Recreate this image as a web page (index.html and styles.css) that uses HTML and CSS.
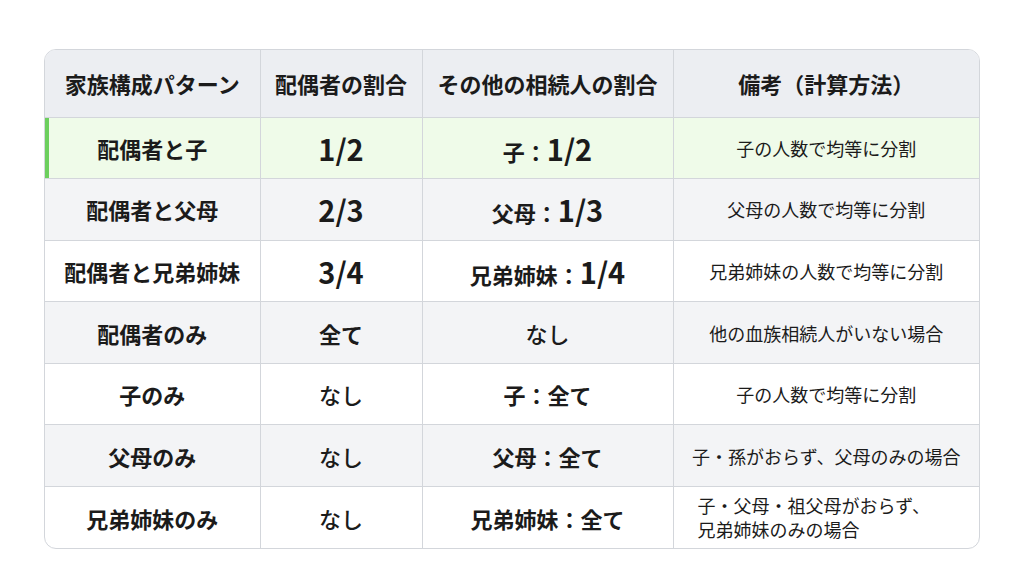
FILE: index.html
```html
<!DOCTYPE html>
<html lang="ja">
<head>
<meta charset="utf-8">
<link rel="stylesheet" href="styles.css">
</head>
<body>
<div class="card">
<table class="tbl">
<colgroup><col class="c1"><col class="c2"><col class="c3"><col class="c4"></colgroup>
<thead>
<tr><th>家族構成パターン</th><th>配偶者の割合</th><th>その他の相続人の割合</th><th>備考（計算方法）</th></tr>
</thead>
<tbody>
<tr class="hl"><td class="name">配偶者と子</td><td class="frac">1/2</td><td class="other">子：<span class="num">1/2</span></td><td class="note">子の人数で均等に分割</td></tr>
<tr class="alt"><td class="name">配偶者と父母</td><td class="frac">2/3</td><td class="other">父母：<span class="num">1/3</span></td><td class="note">父母の人数で均等に分割</td></tr>
<tr><td class="name">配偶者と兄弟姉妹</td><td class="frac">3/4</td><td class="other">兄弟姉妹：<span class="num">1/4</span></td><td class="note">兄弟姉妹の人数で均等に分割</td></tr>
<tr class="alt"><td class="name">配偶者のみ</td><td class="word">全て</td><td class="plain">なし</td><td class="note">他の血族相続人がいない場合</td></tr>
<tr><td class="name">子のみ</td><td class="plain">なし</td><td class="other">子：全て</td><td class="note">子の人数で均等に分割</td></tr>
<tr class="alt"><td class="name">父母のみ</td><td class="plain">なし</td><td class="other">父母：全て</td><td class="note">子・孫がおらず、父母のみの場合</td></tr>
<tr><td class="name">兄弟姉妹のみ</td><td class="plain">なし</td><td class="other">兄弟姉妹：全て</td><td class="note note-left"><span class="two">子・父母・祖父母がおらず、<br>兄弟姉妹のみの場合</span></td></tr>
</tbody>
</table>
</div>
</body>
</html>
```
FILE: styles.css
```css
html, body {
  margin: 0;
  padding: 0;
  background: #ffffff;
}
body {
  padding: 49px 0 0 44px;
  font-family: "Noto Sans CJK JP", "Noto Sans", sans-serif;
  color: #1b1b1b;
}
.card {
  width: 936px;
  box-sizing: border-box;
  border: 1px solid #d3d6db;
  border-radius: 12px;
  overflow: hidden;
}
.tbl {
  width: 100%;
  border-collapse: collapse;
  table-layout: fixed;
}
.c1 { width: 215px; }
.c2 { width: 162px; }
.c3 { width: 251px; }
.c4 { width: auto; }
th, td {
  text-align: center;
  vertical-align: middle;
  padding: 0;
  border-right: 1px solid #d3d6db;
  border-bottom: 1px solid #d3d6db;
  white-space: nowrap;
}
th:last-child, td:last-child { border-right: none; }
tbody tr:last-child td { border-bottom: none; }
thead tr { height: 67px; }
th {
  background: #eceef2;
  font-size: 22px;
  font-weight: 700;
}
tbody tr { height: 61.6px; }
tbody tr.alt td { background: #f3f4f6; }
tbody tr.hl td { background: #effbe9; }
tbody tr.hl td:first-child { box-shadow: inset 4px 0 0 #6ccf5d; }
.name, .word, .plain, .other {
  font-size: 22px;
  font-weight: 700;
}
.plain { font-weight: 500; }
.frac {
  font-size: 29px;
  font-weight: 700;
}
.num {
  font-size: 29px;
  font-weight: 700;
}
.note {
  font-size: 18px;
  font-weight: 400;
}
.note-left {
  text-align: left;
  padding-left: 24px;
}
.two {
  display: inline-block;
  font-size: 18px;
  line-height: 24px;
}
```
